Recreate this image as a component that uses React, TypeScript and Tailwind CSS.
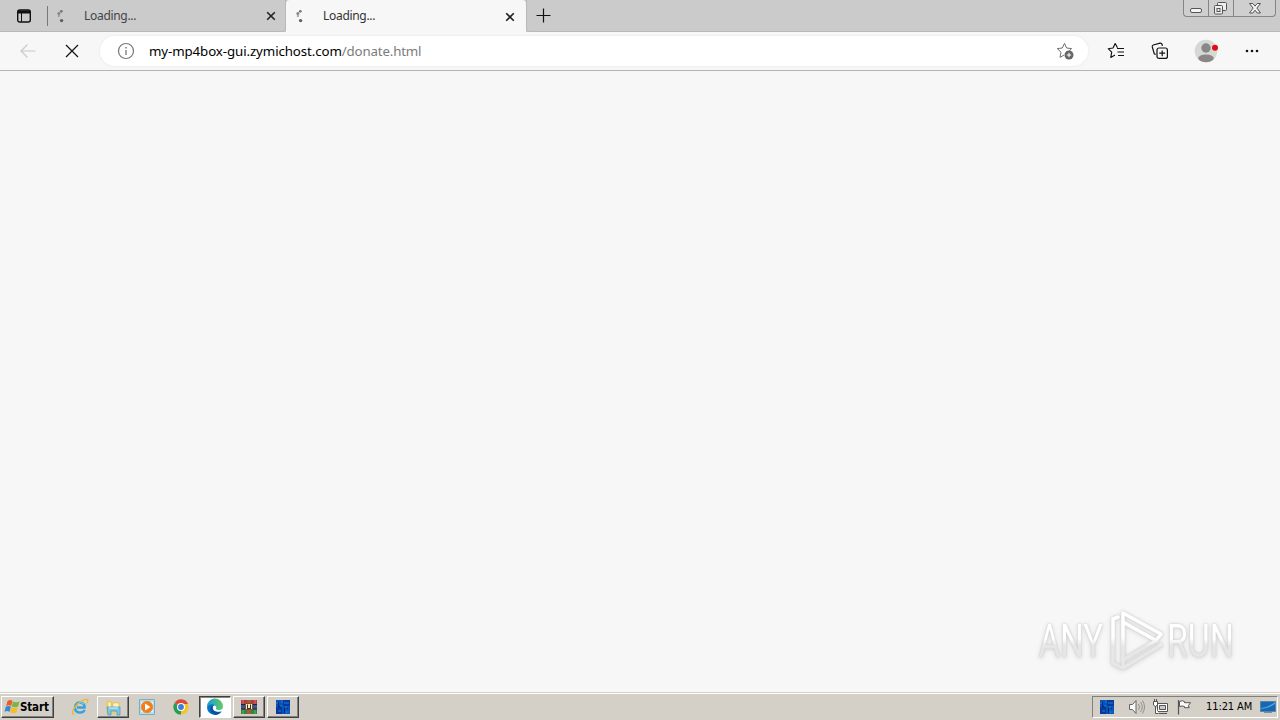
import React from 'react';

function Spinner() {
  return (
    <svg width="16" height="16" viewBox="0 0 16 16" className="block shrink-0" fill="#777">
      <circle cx="9.3" cy="3.3" r="1.4" />
      <circle cx="6.9" cy="5.6" r="1.5" fill="#858585" />
      <circle cx="6.9" cy="8" r="1.1" fill="#999" />
      <circle cx="9.6" cy="12.6" r="1.7" fill="#606060" />
    </svg>
  );
}

function TabClose() {
  return (
    <svg width="10" height="10" viewBox="0 0 10 10" className="mt-px block shrink-0" stroke="#222" strokeWidth="1.6">
      <path d="M1.2 1.2 8.8 8.8M8.8 1.2 1.2 8.8" />
    </svg>
  );
}

function TabBar() {
  return (
    <div className="flex h-8 shrink-0 bg-[#cbcbcb]">
      <div className="flex h-8 w-[286px] items-center rounded-br-[4px] border-b border-r border-[#b9b9b9] bg-[#cbcbcb]">
        <svg width="16" height="16" viewBox="0 0 16 16" className="ml-4 mt-px block shrink-0" fill="none" stroke="#111">
          <rect x="1.7" y="2" width="12.6" height="12" rx="2" strokeWidth="1.4" />
          <path d="M2 4h12" strokeWidth="3" />
          <path d="M5.5 5v9" strokeWidth="1" />
        </svg>
        <div className="ml-[15px] mt-px h-5 w-px bg-[#777]" />
        <div className="ml-[4px] mt-px"><Spinner /></div>
        <span className="ml-4 mt-px w-[182px] text-[12px] leading-4 tracking-[-0.3px] text-[#444]">Loading...</span>
        <TabClose />
      </div>
      <div className="flex h-8 w-[240px] items-center rounded-t-[4px] bg-[#f7f7f7]">
        <div className="ml-[5px]"><Spinner /></div>
        <span className="ml-4 w-[182px] text-[12px] leading-4 tracking-[-0.3px] text-[#333]">Loading...</span>
        <TabClose />
      </div>
      <div className="flex h-8 flex-1 items-center rounded-bl-[4px] border-b border-l border-[#b9b9b9]">
        <svg width="15" height="15" viewBox="0 0 15 15" className="ml-[9px] block" stroke="#111" strokeWidth="1.2">
          <path d="M7.5 .5v14M.5 7.5h14" />
        </svg>
        <div className="ml-auto mr-1 flex h-[17px] self-start rounded-b-[4px] border border-t-0 border-[#858585] bg-[#cfcfcf]">
          <div className="w-[25px] border-r border-[#858585]">
            <svg width="24" height="16" viewBox="0 0 24 16"><rect x="6.5" y="8.5" width="11" height="4" rx="1.5" fill="#f4f4f4" stroke="#555" /></svg>
          </div>
          <div className="w-[25px] border-r border-[#858585]">
            <svg width="24" height="16" viewBox="0 0 24 16" fill="#eee" stroke="#555">
              <rect x="8.5" y="2.5" width="9" height="8" rx="1" />
              <rect x="5.5" y="5.5" width="8" height="8.5" rx="1" />
              <rect x="8" y="8.5" width="3" height="3" />
            </svg>
          </div>
          <div className="w-[41px]">
            <svg width="41" height="16" viewBox="0 0 41 16">
              <path d="M15.5 3.5h3.3l2.2 2.6 2.2-2.6h3.3l-3.6 4.6 3.6 4.9h-3.3L21 10.2 18.8 13h-3.3l3.6-4.9z" fill="#f2f2f2" stroke="#555" />
            </svg>
          </div>
        </div>
      </div>
    </div>
  );
}

function Toolbar() {
  return (
    <div className="flex h-[39px] shrink-0 items-center border-b border-[#b5b5b5] bg-[#f7f7f7]">
      <svg width="16" height="16" viewBox="0 0 16 16" className="ml-5 block shrink-0" fill="none" stroke="#cacaca" strokeWidth="1.2">
        <path d="M15.5 8H1M7.5 1.5 1 8l6.5 6.5" />
      </svg>
      <svg width="14" height="14" viewBox="0 0 14 14" className="ml-[29px] block shrink-0" stroke="#111" strokeWidth="1.2">
        <path d="M1 1 13 13M13 1 1 13" />
      </svg>
      <div className="ml-[21px] flex h-[30px] w-[988px] shrink-0 items-center rounded-full bg-white shadow-[0_0_2px_1px_#efefef]">
        <svg width="18" height="18" viewBox="0 0 18 18" className="ml-[17px] block shrink-0" fill="none" stroke="#777">
          <circle cx="9" cy="9" r="7.5" strokeWidth="1.2" />
          <path d="M9 8v5" strokeWidth="1.3" />
          <path d="M9 5v1.5" strokeWidth="1.5" />
        </svg>
        <span className="ml-[14px] whitespace-nowrap text-[13.3px] leading-5 tracking-[-0.1px] text-black">my-mp4box-gui.zymichost.com</span>
        <span className="whitespace-nowrap text-[13.3px] leading-5 tracking-[-0.17px] text-[#7b7b7b]">/donate.html</span>
        <svg width="18" height="18" viewBox="0 0 18 18" className="ml-auto mr-[14px] block shrink-0" fill="none" stroke="#6d6d6d">
          <path d="m8.5 1.4 2.1 4.6 5 .6-3.6 3.5.2 1M8.5 1.4 6.3 6l-5 .6L5 10.2 4 15.4l4-2.3" strokeLinejoin="round" />
          <circle cx="13" cy="13" r="4.5" fill="#666" stroke="none" />
          <path d="M13 10.8v4.4M10.8 13h4.4" stroke="#fff" />
        </svg>
      </div>
      <svg width="18" height="18" viewBox="0 0 18 18" className="ml-[19px] block shrink-0" fill="none" stroke="#111" strokeWidth="1.15">
        <path d="M10.5 5.7 8.2 1.5 6 6l-4.8.7 3.5 3.5-.9 5.2 4.2-2.3M10 6.5h7M10.5 10h6.5M11 13.5h6" strokeLinejoin="round" />
      </svg>
      <svg width="18" height="18" viewBox="0 0 18 18" className="ml-[26px] block shrink-0" fill="none" stroke="#111" strokeWidth="1.2">
        <path d="M4.7 12.6 3.3 11.8 1.3 5q-.4-1.5 1-2l6.8-1.8q1.4-.3 1.9 1.1l.4 1.5" />
        <rect x="6" y="6" width="10.4" height="10.4" rx="2" />
        <path d="M11.2 8.4v5.8M8.3 11.2h5.8" />
      </svg>
      <svg width="24" height="24" viewBox="0 0 24 24" className="ml-[25px] block shrink-0">
        <circle cx="12" cy="12" r="11.3" fill="#d5d9d6" />
        <circle cx="12" cy="9" r="4.7" fill="#8c8787" />
        <path d="M4.2 20q0-4.5 7.8-4.5t7.8 4.5q-3.1 3.2-7.8 3.2T4.2 20" fill="#8c8787" />
        <circle cx="21" cy="8.7" r="3" fill="#e30b16" />
      </svg>
      <svg width="16" height="6" viewBox="0 0 16 6" className="ml-[26px] block shrink-0" fill="#111">
        <circle cx="3" cy="3" r="1.3" /><circle cx="8" cy="3" r="1.3" /><circle cx="13" cy="3" r="1.3" />
      </svg>
    </div>
  );
}

function Watermark() {
  return (
    <div className="mb-[15px] ml-auto mr-[43px] mt-auto flex h-[72px] w-[200px] items-center text-white [filter:drop-shadow(0_0_1px_#c8c8c8)_drop-shadow(0_1px_2px_#dadada)]">
      <div className="flex h-[44px] w-[68px] items-center justify-center">
        <span className="origin-center scale-x-[0.7] bg-gradient-to-b from-white from-45% to-[#e6e6e6] to-60% bg-clip-text font-['Roboto','Liberation_Sans',sans-serif] text-[47px] leading-[48px] text-transparent">ANY</span>
      </div>
      <svg width="60" height="68" viewBox="0 0 60 68" className="block shrink-0" fill="none" strokeLinejoin="round" strokeLinecap="round">
        <defs>
          <linearGradient id="wm" gradientUnits="userSpaceOnUse" x1="0" y1="0" x2="0" y2="68"><stop offset=".45" stopColor="#fff" /><stop offset=".58" stopColor="#e7e7e7" /></linearGradient>
        </defs>
        <g stroke="url(#wm)" strokeWidth="3.6">
          <path d="M18 15v38l33-19.5Z" />
          <path d="M18 15V6L56 27 51 33.5M18 61l38-23M18 53v8M8 12v44l7 4M8 12l5-2" />
        </g>
      </svg>
      <div className="flex h-[44px] w-[70px] items-center justify-center">
        <span className="origin-center scale-x-[0.72] bg-gradient-to-b from-white from-45% to-[#e6e6e6] to-60% bg-clip-text font-['Roboto','Liberation_Sans',sans-serif] text-[47px] leading-[48px] text-transparent">RUN</span>
      </div>
    </div>
  );
}

function Pixels() {
  return (
    <svg width="16" height="16" viewBox="0 0 16 16" className="block shrink-0">
      <path d="M1 1h14v14H1z" fill="#0753b9" />
      <path d="M8 1h7v6H8zM1 8h6v7H1z" fill="#08389b" />
      <path d="M3 3h1v4h3v1H3zM9 9h4v1h-3v4H9z" fill="#002475" />
      <path d="M1 4h2M5 7h3M9 4h5M3 12h3M10 13h4M7 1v3M11 7v3" stroke="#1b80d8" />
    </svg>
  );
}

function TaskButton({ children, active = false }: { children: React.ReactNode; active?: boolean }) {
  return (
    <div className={active
      ? 'flex h-[22px] w-8 items-center justify-center border border-b-white border-l-[#404040] border-r-white border-t-[#404040] bg-white shadow-[inset_1px_1px_0_#888]'
      : 'flex h-[22px] w-8 items-center justify-center border border-b-[#404040] border-l-white border-r-[#404040] border-t-white bg-[#d4d0c8] shadow-[inset_-1px_-1px_0_#808080]'}>
      {children}
    </div>
  );
}

function Taskbar() {
  return (
    <div className="flex h-7 shrink-0 border-t border-[#d4d0c8] bg-[#d4d0c8]">
      <div className="flex h-[27px] flex-1 items-center border-t border-white pb-px">
        <div className="ml-px flex h-[22px] w-[53px] items-center border border-b-[#404040] border-l-white border-r-[#404040] border-t-white pl-px shadow-[inset_-1px_-1px_0_#808080]">
          <svg width="18" height="16" viewBox="0 0 17 16" className="block shrink-0">
            <path d="M4 2q3-2 5 0L7.7 7Q5.5 5.5 2.7 7z" fill="#ed5b2d" />
            <path d="M9.4 2.5q3 1.5 6.6 0L14.6 7.4q-3 1.4-6.3.2z" fill="#73b943" />
            <path d="M2.4 7.6q3-1.5 5 .2L6 13Q3.7 11.3 1 12.8z" fill="#3189d4" />
            <path d="M8 8.3q3 1.3 6.3 0L13 13.5q-3 1.4-6.3-.1z" fill="#f7bc29" />
          </svg>
          <span className="-ml-px font-['DejaVu_Sans_Condensed','DejaVu_Sans',sans-serif] text-[11.5px] font-bold leading-4 tracking-[-0.15px] text-black">Start</span>
        </div>
        <svg width="18" height="18" viewBox="0 0 18 18" className="ml-[17px] block" fill="none">
          <path d="M13.6 12Q12 15 8.5 14.5q-4.8-.5-4.5-5.3.7-4.7 5.1-4.7 4.8.5 4.5 5H6" stroke="#39a1dc" strokeWidth="2.4" />
          <path d="M13 6q-3-3-7 0" stroke="#78d5f6" />
          <path d="M3 16.5Q-1 15 5 8T16 1.5q2 .5-.4 4" stroke="#e8b92d" strokeWidth="1.3" />
        </svg>
        <div className="ml-2">
          <TaskButton>
            <svg width="18" height="18" viewBox="0 0 18 18">
              <path d="M2 3q0-1 1-1h3l1 2h9v12H2z" fill="#e8cc78" />
              <path d="M4 4h3v10H4zM9 5h6v8H9z" fill="#fff4b9" stroke="#d7b54b" strokeWidth=".5" />
              <path d="M3 9h13v8h-3v-4H7v4H4z" fill="#79c6e7" stroke="#4797bd" strokeWidth=".7" />
              <path d="M5 10h9" stroke="#d6f4ff" />
            </svg>
          </TaskButton>
        </div>
        <svg width="16" height="16" viewBox="0 0 16 16" className="ml-[10px] block">
          <path d="M.5.5h15v15H.5z" fill="#b6def0" stroke="#78adc7" />
          <path d="M2 3h12v10H2z" fill="#e3eff3" />
          <circle cx="8" cy="8" r="5.7" fill="#f47d17" stroke="#e78c37" />
          <path d="m6 4.5 5.5 3.5L6 11.5z" fill="#fff" />
        </svg>
        <svg width="16" height="16" viewBox="0 0 16 16" className="ml-[18px] block">
          <path d="M8 8 1.5 4A7.5 7.5 0 0 1 15 5z" fill="#de4b36" />
          <path d="M8 8 1.5 4A7.6 7.6 0 0 0 8 15.6l3-6z" fill="#289e51" />
          <path d="M8 8 8 15.6A7.6 7.6 0 0 0 15 5H8z" fill="#f3c52b" />
          <circle cx="8" cy="8" r="4" fill="#fff" /><circle cx="8" cy="8" r="2.9" fill="#397fda" />
        </svg>
        <div className="ml-[10px] flex gap-[2px]">
          <TaskButton active>
            <svg width="18" height="18" viewBox="0 0 18 18" className="block">
              <defs>
                <linearGradient id="edge" x1="0" y1="0" x2="1" y2="0"><stop stopColor="#159bd7" /><stop offset="1" stopColor="#64cc62" /></linearGradient>
              </defs>
              <path d="M1 9A8 8 0 0 1 17 8q.3 4-4.2 4-4 0-2.4-3Q8 5 1 9" fill="url(#edge)" />
              <path d="M1 9q3-4 8-2-3 1-2 4 1.5 4 8.7 2.2A8 8 0 0 1 1 9" fill="#0876c5" />
              <path d="M6 8q-4 4 1 8 4 2 8-2-5 1-7.6-1.4Q5.7 11 7 8" fill="#084f9e" />
            </svg>
          </TaskButton>
          <TaskButton>
            <svg width="18" height="16" viewBox="0 0 18 16" className="block">
              <path d="M1 1h16v5H1z" fill="#b63842" /><path d="M1 6h16v4H1z" fill="#35549f" /><path d="M1 10h16v5H1z" fill="#348344" />
              <path d="M1 5.5h16M1 10h16" stroke="#252525" />
              <path d="M7 1h4v14H7z" fill="#a65b35" />
              <path d="M5.5 4.5h7v6h-7z" fill="#f8e8c2" stroke="#805025" /><path d="M7.5 5.5v4M10.5 5.5v4M7 9.5h4" stroke="#333" />
              <path d="M3 1v4M15 1v4" stroke="#e36d75" /><path d="M3 11v4M15 11v4" stroke="#63b354" />
            </svg>
          </TaskButton>
          <TaskButton><Pixels /></TaskButton>
        </div>
        <div className="ml-auto mr-[2px] flex h-[22px] w-[186px] items-center border border-b-white border-l-[#808080] border-r-white border-t-[#808080] pl-[6px]">
          <Pixels />
          <svg width="18" height="16" viewBox="0 0 18 16" className="ml-[13px] block shrink-0" fill="none" stroke="#666">
            <path d="M1.5 5.5h3L8 1.5v13l-3.5-4h-3z" fill="#fafafa" />
            <path d="M10.5 5q2 3 0 6M12.5 3q3.5 5 0 10M14.5 1.5q4 6.5 0 13" stroke="#888" strokeWidth=".9" />
          </svg>
          <svg width="18" height="16" viewBox="0 0 18 16" className="ml-[6px] block shrink-0" fill="#fff" stroke="#555">
            <path d="M5.5 4.5h10v8h-10z" /><path d="M7.5 6.5h6v4h-6z" fill="#c9c9c9" />
            <path d="M1.5 2.5h4V6l-2 1.5L1.5 6zM2.5 0v2M4.5 0v2M3.5 7v7.5h3M7 14.5h8" />
          </svg>
          <svg width="16" height="16" viewBox="0 0 16 16" className="ml-[6px] block shrink-0" fill="#fafafa" stroke="#555">
            <path d="M2.5 1v14.5" strokeWidth="1.2" /><path d="M3.5 2.5q3-1.5 5 0v1.2h6l-2.2 3 1 2H8.5V7.5q-2-1-5 0z" />
          </svg>
          <span className="ml-[14px] whitespace-nowrap font-['DejaVu_Sans_Condensed','DejaVu_Sans',sans-serif] text-[11px] leading-4 tracking-[-0.1px] text-black">11:21 AM</span>
          <svg width="16" height="14" viewBox="0 0 16 14" className="ml-auto mr-px block shrink-0">
            <path d="M.5 1.5h15v10H.5z" fill="#1767b4" stroke="#5b83a5" /><path d="M1 8Q9 7 15 2v2Q10 8 1 9z" fill="#4ca4e0" />
            <path d="M4 12h8v1H4z" fill="#7890a5" />
          </svg>
        </div>
      </div>
    </div>
  );
}

export default function App() {
  return (
    <div className="flex h-[720px] w-[1280px] flex-col overflow-hidden bg-[#f7f7f7] font-['Noto_Sans','Open_Sans',sans-serif]">
      <TabBar />
      <Toolbar />
      <main className="flex flex-1"><Watermark /></main>
      <Taskbar />
    </div>
  );
}
